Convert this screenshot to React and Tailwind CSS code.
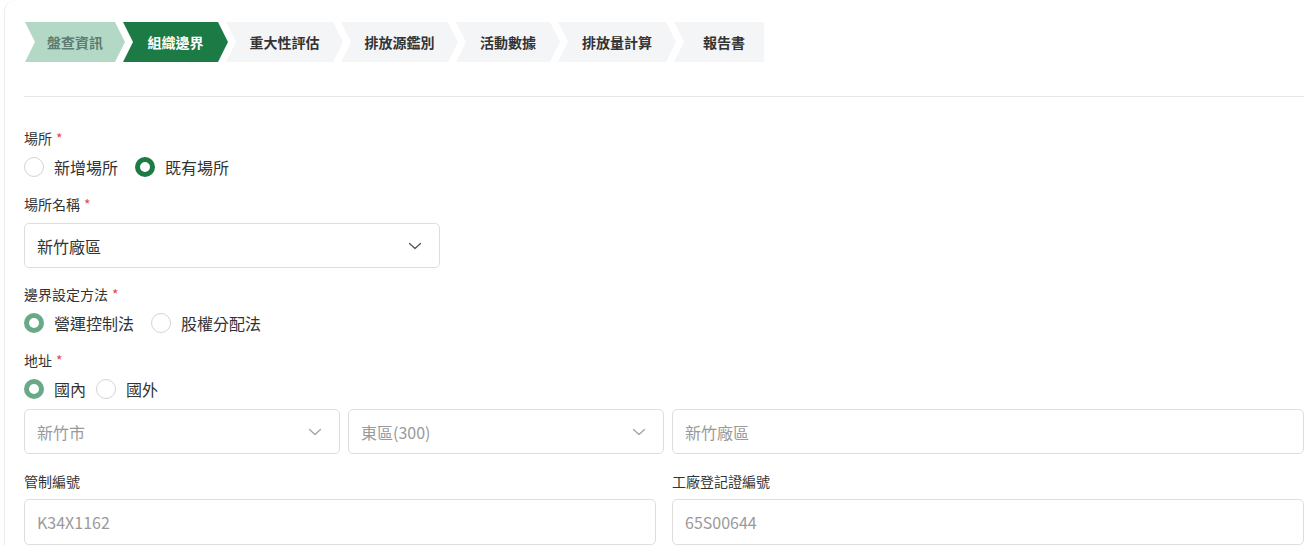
import React from 'react';

const steps = [
  { label: '盤查資訊', w: 100, state: 'done' },
  { label: '組織邊界', w: 105, state: 'active' },
  { label: '重大性評估', w: 117, state: 'todo' },
  { label: '排放源鑑別', w: 117, state: 'todo' },
  { label: '活動數據', w: 104, state: 'todo' },
  { label: '排放量計算', w: 118, state: 'todo' },
  { label: '報告書', w: 90, state: 'last' },
];

const arrowClip = 'polygon(0 0, calc(100% - 10px) 0, 100% 50%, calc(100% - 10px) 100%, 0 100%, 10px 50%)';
const lastClip = 'polygon(0 0, 100% 0, 100% 100%, 0 100%, 10px 50%)';

const Chevron = ({ light }) => (
  <svg width="16" height="16" viewBox="0 0 16 16" fill="none">
    <path
      d="M2.5 5.5 8 10.5l5.5-5"
      stroke={light ? '#a3a3a3' : '#555'}
      strokeWidth="1.3"
      strokeLinecap="round"
      strokeLinejoin="round"
    />
  </svg>
);

const Radio = ({ label, checked, tone }) => (
  <label className="flex items-center gap-[10px] h-5">
    {checked ? (
      <span
        className={
          'h-5 w-5 rounded-full border-[5px] bg-white ' +
          (tone === 'light' ? 'border-[#6aa987]' : 'border-[#1c7a45]')
        }
      />
    ) : (
      <span className="h-5 w-5 rounded-full border-[1.5px] border-[#d4d4d4] bg-white" />
    )}
    <span className="text-[16px] leading-5 text-[#333]">{label}</span>
  </label>
);

const Label = ({ children, required }) => (
  <div className="h-5 text-[14px] leading-5 text-[#333]">
    {children}
    {required && <span className="ml-1 text-[#e5484d]">*</span>}
  </div>
);

const Field = ({ value, select, muted, className }) => (
  <div
    className={
      'flex items-center justify-between rounded-[5px] border border-[#dedede] bg-white pl-3 pr-4 ' +
      (className || '')
    }
  >
    <span className={'text-[16px] leading-5 ' + (muted ? 'text-[#9a9a9a]' : 'text-[#333]')}>{value}</span>
    {select && <Chevron light={muted} />}
  </div>
);

export default function App() {
  return (
    <div
      className="min-h-screen bg-white"
      style={{ fontFamily: '"Noto Sans CJK TC", "Noto Sans", sans-serif' }}
    >
      <div className="ml-1 rounded-tl-xl border-l border-[#ececec] pl-[19px] pr-[7px] pt-[22px]">
        {/* steps */}
        <div className="flex pl-px">
          {steps.map((s, i) => (
            <div
              key={s.label}
              className={
                'flex h-10 items-center justify-center pl-[10px] text-[14px] font-bold ' +
                (i > 0 ? '-ml-[2px] ' : '') +
                (s.state === 'done'
                  ? 'bg-[#b4d8c6] text-[#5e7c70]'
                  : s.state === 'active'
                  ? 'bg-[#1c7a45] text-white'
                  : 'bg-[#f4f5f7] text-[#333]')
              }
              style={{ width: s.w, clipPath: s.state === 'last' ? lastClip : arrowClip }}
            >
              <span className={s.state === 'last' ? '' : 'pr-[10px]'}>{s.label}</span>
            </div>
          ))}
        </div>

        <div className="mt-[34px] h-px bg-[#e6e6e6]" />

        {/* form */}
        <div className="pt-[31px]">
          <Label required>場所</Label>
          <div className="mt-[9px] flex gap-[17px]">
            <Radio label="新增場所" />
            <Radio label="既有場所" checked />
          </div>

          <div className="mt-[17px]">
            <Label required>場所名稱</Label>
          </div>
          <Field value="新竹廠區" select className="mt-[9px] h-[45px] w-[416px]" />

          <div className="mt-[16px]">
            <Label required>邊界設定方法</Label>
          </div>
          <div className="mt-[9px] flex gap-[17px]">
            <Radio label="營運控制法" checked tone="light" />
            <Radio label="股權分配法" />
          </div>

          <div className="mt-[17px]">
            <Label required>地址</Label>
          </div>
          <div className="mt-[9px] flex gap-[10px]">
            <Radio label="國內" checked tone="light" />
            <Radio label="國外" />
          </div>

          <div className="mt-[10px] grid grid-cols-[316px_316px_1fr] gap-2">
            <Field value="新竹市" select muted className="h-[45px]" />
            <Field value="東區(300)" select muted className="h-[45px]" />
            <Field value="新竹廠區" muted className="h-[45px]" />
          </div>

          <div className="mt-[17px] grid grid-cols-2 gap-4">
            <div>
              <Label>管制編號</Label>
              <Field value="K34X1162" muted className="mt-2 h-[46px]" />
            </div>
            <div>
              <Label>工廠登記證編號</Label>
              <Field value="65S00644" muted className="mt-2 h-[46px]" />
            </div>
          </div>
        </div>
      </div>
    </div>
  );
}
